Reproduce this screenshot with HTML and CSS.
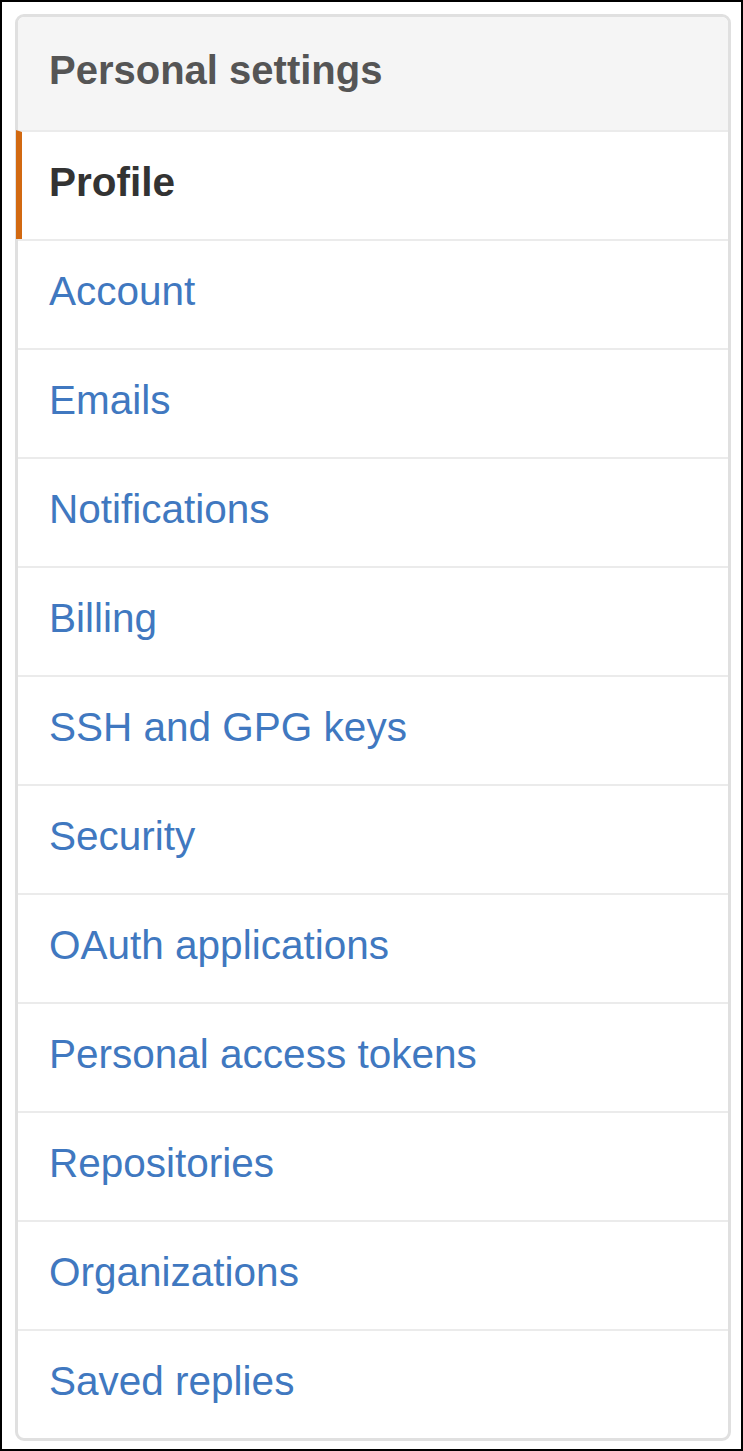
FILE: index.html
```html
<!DOCTYPE html>
<html lang="en">
<head>
<meta charset="utf-8">
<title>Personal settings</title>
<link rel="stylesheet" href="styles.css">
</head>
<body>
<div class="frame">
  <nav class="menu">
    <h3 class="menu-heading">Personal settings</h3>
    <a class="menu-item selected" href="#">Profile</a>
    <a class="menu-item" href="#">Account</a>
    <a class="menu-item" href="#">Emails</a>
    <a class="menu-item" href="#">Notifications</a>
    <a class="menu-item" href="#">Billing</a>
    <a class="menu-item" href="#">SSH and GPG keys</a>
    <a class="menu-item" href="#">Security</a>
    <a class="menu-item" href="#">OAuth applications</a>
    <a class="menu-item" href="#">Personal access tokens</a>
    <a class="menu-item" href="#">Repositories</a>
    <a class="menu-item" href="#">Organizations</a>
    <a class="menu-item" href="#">Saved replies</a>
  </nav>
</div>
</body>
</html>
```

FILE: styles.css
```css
html, body {
  margin: 0;
  padding: 0;
  background: #fff;
}

.frame {
  box-sizing: border-box;
  width: 743px;
  height: 1451px;
  border: 2px solid #000;
  padding: 12px 10px 0 13px;
  font-family: "Liberation Sans", Arial, sans-serif;
}

.menu {
  display: flex;
  flex-direction: column;
  width: 716px;
  box-sizing: border-box;
  border: 3px solid #e0e0e0;
  border-radius: 9px;
  background: #fff;
}

.menu-heading {
  margin: 0;
  height: 113px;
  box-sizing: border-box;
  display: flex;
  align-items: center;
  padding: 0 0 7px 31px;
  background: #f5f5f5;
  border-radius: 6px 6px 0 0;
  color: #555;
  font-size: 40px;
  font-weight: bold;
}

.menu-item {
  height: 109px;
  box-sizing: border-box;
  display: flex;
  align-items: center;
  padding: 0 0 6px 31px;
  border-top: 2px solid #ebebeb;
  color: #4078c0;
  font-size: 40.5px;
  text-decoration: none;
}

.menu-item.selected {
  margin-left: -2px;
  border-left: 6px solid #d26911;
  padding-left: 27px;
  color: #333;
  font-weight: bold;
}
```
